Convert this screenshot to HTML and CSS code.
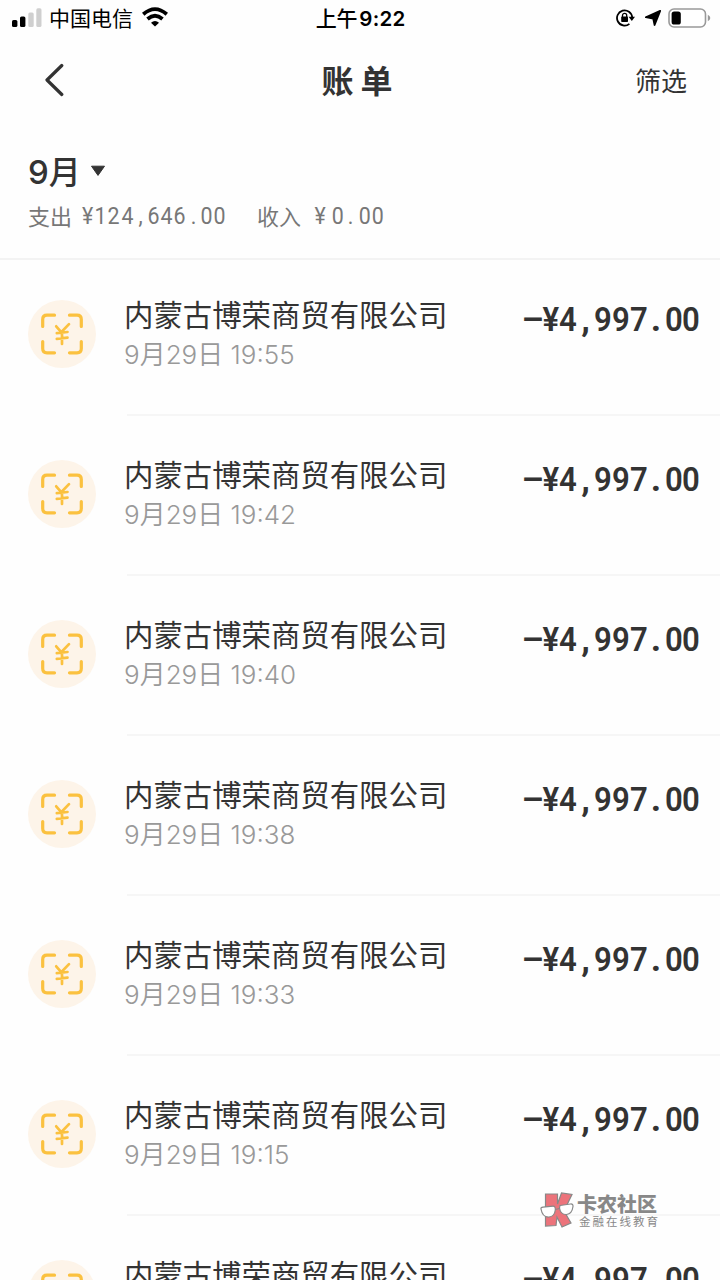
FILE: index.html
```
<!DOCTYPE html>
<html lang="zh-CN">
  <head>
    <meta charset="UTF-8" />
    <meta name="viewport" content="width=device-width, initial-scale=1.0" />
    <title>账单</title>
    <link rel="stylesheet" href="styles.css">
  </head>
  <body>
    <svg class="defs" width="0" height="0">
      <symbol id="scan-pay" viewBox="0 0 68 68">
        <circle cx="34" cy="34" r="34" fill="#fdf4e9" />
        <g fill="none" stroke="#fbc13f" stroke-width="3.2" stroke-linecap="round" stroke-linejoin="round">
          <path d="M14.7 26.5V19.5Q14.7 15.2 19 15.2H26.5" />
          <path d="M41.5 15.2H49Q53.3 15.2 53.3 19.5V26.5" />
          <path d="M14.7 41.5V48.5Q14.7 52.8 19 52.8H26.5" />
          <path d="M41.5 52.8H49Q53.3 52.8 53.3 48.5V41.5" />
          <path d="M28.2 26.3L33.2 32.2L41 24.1M28.8 33.2L39.5 32M28.8 38.8L39.5 37.6M34 33V44" stroke-width="2.7" />
        </g>
      </symbol>
    </svg>

    <div class="screen">
      <div class="status-bar">
        <div class="status-left">
          <svg class="signal" width="30" height="20" viewBox="0 0 30 20">
            <rect x="0" y="12" width="5.4" height="7" rx="1.6" />
            <rect x="8" y="8.5" width="5.4" height="10.5" rx="1.6" />
            <rect x="16.3" y="4.5" width="5.4" height="14.5" rx="1.6" fill="#cfcfcf" />
            <rect x="24.3" y="0.3" width="5.2" height="18.7" rx="1.6" fill="#cfcfcf" />
          </svg>
          <span class="carrier">中国电信</span>
          <svg class="wifi" width="26" height="20" viewBox="0 0 26 20">
            <g fill="none" stroke="#000" stroke-width="3.8">
              <path d="M1.2 7.2Q13 -3 24.8 7.2" />
              <path d="M5.5 12Q13 5.6 20.5 12" />
            </g>
            <path d="M9 15.8Q13 12 17 15.8L13 19.6Z" />
          </svg>
        </div>
        <div class="status-time">上午 <b>9:22</b></div>
        <div class="status-right">
          <svg width="19" height="18" viewBox="0 0 19 18">
            <path d="M16.2 8.4A7.6 7.6 0 1 0 13.4 14.9" fill="none" stroke="#000" stroke-width="1.8" />
            <path d="M12.6 7.8H19L15.8 12Z" />
            <rect x="5.2" y="7.6" width="6.8" height="5.4" rx="0.8" />
            <path d="M6.5 8V6.4A2.1 2.1 0 0 1 10.7 6.4V8" fill="none" stroke="#000" stroke-width="1.3" />
          </svg>
          <svg class="arrow" width="16" height="16" viewBox="0 0 16 16">
            <path d="M15.2 0.8L9.6 15L8.2 8.6L0.8 7.2Z" stroke="#000" stroke-width="1.8" stroke-linejoin="round" />
          </svg>
          <svg class="battery" width="43" height="20" viewBox="0 0 43 20">
            <rect x="1" y="1" width="36.5" height="18" rx="5" fill="#fff" stroke="#999" stroke-width="1.6" />
            <rect x="3.6" y="3.5" width="9.2" height="13" rx="2.6" />
            <path d="M39.8 6.8Q42.3 8 42.3 10T39.8 13.2Z" fill="#999" />
          </svg>
        </div>
      </div>

      <div class="nav-bar">
        <svg class="back" width="20" height="34" viewBox="0 0 20 34">
          <path d="M17.8 2.5L3 17L17.8 31.5" fill="none" stroke="#333" stroke-width="3.2" stroke-linecap="round" stroke-linejoin="round" />
        </svg>
        <h1>账单</h1>
        <span class="filter">筛选</span>
      </div>

      <div class="summary">
        <div class="month">
          <span><b>9</b>月</span>
          <svg width="16" height="12" viewBox="0 0 16 12">
            <path d="M1.5 1.2H14.5L8 10.4Z" fill="#333" stroke="#333" stroke-linejoin="round" />
          </svg>
        </div>
        <div class="totals">
          <span class="label">支出</span>
          <span class="money">¥124,646.00</span>
          <span class="label income">收入</span>
          <span class="money wide">¥0.00</span>
        </div>
      </div>

      <div class="bill-list">
        <!-- Las filas se generan en el script -->
      </div>

      <div class="watermark">
        <svg width="34" height="36" viewBox="0 0 34 36">
          <path d="M5.5 2H17.5V12L21.5 1L32 2.5L24 19L31 31L22 35L17 25L16 33.5L5.5 34Z" fill="#ec737b" stroke="#888" stroke-width="1.2" />
          <path d="M1 17Q0.5 15.5 3 15.2L13 14.2Q15.5 14 15.3 18Q14.5 24.5 9 25Q2.5 25.5 1 17Z" fill="#fff" stroke="#888" stroke-width="1.2" />
          <path d="M20 13.5L30.5 12Q33.2 11.7 33 14.5Q32 22 26.5 22.5Q20.5 22.8 19.5 16Z" fill="#fff" stroke="#888" stroke-width="1.2" />
          <path d="M15.3 17.5L19.5 16.5" stroke="#888" stroke-width="1.2" />
        </svg>
        <div class="watermark-text">
          <strong>卡农社区</strong>
          <span>金融在线教育</span>
        </div>
      </div>
    </div>

    <script>
      const times = ["19:55", "19:42", "19:40", "19:38", "19:33", "19:15", "19:12"];
      const list = document.querySelector(".bill-list");

      times.forEach((time) => {
        const row = document.createElement("div");
        row.classList.add("bill");
        row.innerHTML = `
          <svg class="bill-icon"><use href="#scan-pay"></use></svg>
          <div class="bill-body">
            <div class="bill-info">
              <div class="bill-name">内蒙古博荣商贸有限公司</div>
              <div class="bill-date">9月29日 ${time}</div>
            </div>
            <div class="money amount">–¥4,997.00</div>
          </div>
        `;
        list.appendChild(row);
      });

      // Cada cifra ocupa una celda del mismo ancho
      document.querySelectorAll(".money").forEach((el) => {
        el.innerHTML = [...el.textContent]
          .map((c) => `<span${c === "," || c === "." ? ' class="mark"' : ""}>${c}</span>`)
          .join("");
      });
    </script>
  </body>
</html>
```
FILE: styles.css
```
* {
  box-sizing: border-box;
}

body {
  margin: 0;
  background-color: #fff;
  color: #333;
  font-family: "Noto Sans CJK SC", sans-serif;
}

svg {
  display: block;
  flex-shrink: 0;
}

.defs {
  display: none;
}

.screen {
  position: relative;
  width: 720px;
  height: 1280px;
  overflow: hidden;
  background-color: #fefefe;
}

/* Barra de estado */
.status-bar {
  display: grid;
  grid-template-columns: 1fr auto 1fr;
  align-items: center;
  height: 36px;
  padding: 0 9px 0 12px;
  color: #000;
  font-size: 21px;
  line-height: 34px;
}

.status-left,
.status-right {
  display: flex;
  align-items: center;
}

.signal {
  margin-right: 7px;
}

.carrier {
  height: 36px;
}

.wifi {
  margin-left: 9px;
  margin-top: -2px;
}

.status-time {
  height: 36px;
  margin-right: 2px;
  font-size: 21px;
  font-weight: 500;
}

.status-time b {
  margin-left: -3px;
  font-family: Inter, sans-serif;
  font-weight: 600;
  font-size: 20.5px;
  letter-spacing: 0.2px;
}

.status-right {
  justify-content: flex-end;
}

.arrow {
  margin: 0 7px 0 10px;
}

/* Navegación */
.nav-bar {
  display: grid;
  grid-template-columns: 1fr auto 1fr;
  align-items: center;
  height: 88px;
  padding: 0 33px 0 44px;
}

h1 {
  margin: -2px 10px 0 0;
  font-size: 32px;
  font-weight: 700;
  letter-spacing: 7px;
  line-height: 48px;
}

.filter {
  justify-self: end;
  margin-top: -2px;
  font-size: 26px;
}

/* Resumen del mes */
.summary {
  height: 136px;
  padding: 24px 28px 0;
  border-bottom: 2px solid #f3f3f3;
}

.month {
  display: flex;
  align-items: center;
  gap: 9px;
  height: 46px;
  font-size: 32px;
  font-weight: 500;
  line-height: 44px;
}

.month b {
  font-family: Inter, sans-serif;
  font-size: 33px;
  font-weight: 500;
}

.totals {
  display: flex;
  align-items: center;
  height: 44px;
  color: #777;
  font-size: 22px;
}

.totals .label {
  width: 53px;
  height: 34px;
  line-height: 32px;
}

.totals .income {
  width: 52px;
  margin-left: 31px;
}

.money {
  display: flex;
  margin-top: 1px;
  font-family: Roboto, sans-serif;
  font-size: 23px;
}

.money span {
  width: 13.2px;
  display: flex;
  justify-content: center;
  transform: scaleX(0.93);
}

.totals .wide span {
  width: 13.3px;
}

.totals .wide span:first-child {
  width: 22px;
}

/* Lista de movimientos */
.bill-list {
  margin-top: -4px;
}

.bill {
  display: flex;
  height: 160px;
  padding-left: 28px;
}

.bill-icon {
  width: 68px;
  height: 68px;
  margin: 44px 31px 0 0;
}

.bill-body {
  flex: 1;
  display: flex;
  justify-content: space-between;
  padding: 36px 20px 0 0;
  border-bottom: 2px solid #f6f6f6;
}

.bill-info {
  margin-left: -3px;
}

.bill-name {
  font-size: 29.4px;
  line-height: 42px;
  white-space: nowrap;
}

.bill-date {
  color: #999;
  font-family: Inter, "Noto Sans CJK SC", sans-serif;
  font-size: 26px;
  font-weight: 350;
  line-height: 42px;
}

.amount {
  height: 54px;
  margin-top: 0;
  align-items: center;
  font-size: 33.5px;
  font-weight: 600;
}

.amount span {
  width: 17.6px;
}

.amount span:first-child {
  transform: scaleX(1.05);
}

.amount .mark {
  font-weight: 800;
  transform: none;
}

/* Marca de agua */
.watermark {
  position: absolute;
  left: 540px;
  top: 1192px;
  display: flex;
  gap: 3px;
  color: #888;
}

.watermark-text {
  display: flex;
  flex-direction: column;
}

.watermark strong {
  font-size: 20px;
  font-weight: 900;
  line-height: 24px;
}

.watermark-text span {
  margin-left: 2px;
  font-size: 11.5px;
  letter-spacing: 2px;
  line-height: 10px;
  white-space: nowrap;
}
```
